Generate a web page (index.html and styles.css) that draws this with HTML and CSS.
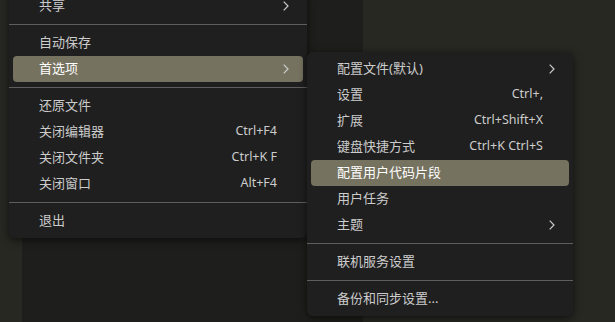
FILE: index.html
```html
<!DOCTYPE html>
<html lang="zh-CN">
<head>
    <meta charset="UTF-8">
    <title>菜单</title>
    <link rel="stylesheet" href="styles.css">
</head>
<body>
    <div class="workbench">
        <div class="activity"></div>
        <div class="sidebar"></div>
        <div class="editor"></div>
    </div>

    <!-- main file menu -->
    <div class="menu main-menu">
        <div class="item"><span class="label">共享</span><svg class="chev" viewBox="0 0 6 10"><polyline points="0.7,0.7 5,5 0.7,9.3"/></svg></div>
        <div class="sep"></div>
        <div class="item"><span class="label">自动保存</span></div>
        <div class="item active"><span class="label">首选项</span><svg class="chev" viewBox="0 0 6 10"><polyline points="0.7,0.7 5,5 0.7,9.3"/></svg></div>
        <div class="sep"></div>
        <div class="item"><span class="label">还原文件</span></div>
        <div class="item"><span class="label">关闭编辑器</span><span class="keys">Ctrl+F4</span></div>
        <div class="item"><span class="label">关闭文件夹</span><span class="keys">Ctrl+K F</span></div>
        <div class="item"><span class="label">关闭窗口</span><span class="keys">Alt+F4</span></div>
        <div class="sep"></div>
        <div class="item"><span class="label">退出</span></div>
    </div>

    <!-- preferences submenu -->
    <div class="menu sub-menu">
        <div class="item"><span class="label">配置文件(默认)</span><svg class="chev" viewBox="0 0 6 10"><polyline points="0.7,0.7 5,5 0.7,9.3"/></svg></div>
        <div class="item"><span class="label">设置</span><span class="keys">Ctrl+,</span></div>
        <div class="item"><span class="label">扩展</span><span class="keys">Ctrl+Shift+X</span></div>
        <div class="item"><span class="label">键盘快捷方式</span><span class="keys">Ctrl+K Ctrl+S</span></div>
        <div class="item active"><span class="label">配置用户代码片段</span></div>
        <div class="item"><span class="label">用户任务</span></div>
        <div class="item"><span class="label">主题</span><svg class="chev" viewBox="0 0 6 10"><polyline points="0.7,0.7 5,5 0.7,9.3"/></svg></div>
        <div class="sep"></div>
        <div class="item"><span class="label">联机服务设置</span></div>
        <div class="sep"></div>
        <div class="item"><span class="label">备份和同步设置...</span></div>
    </div>
</body>
</html>
```

FILE: styles.css
```css
html, body {
    margin: 0;
    height: 100%;
    overflow: hidden;
}

body {
    background: #272822;
    font-family: "Noto Sans", "Noto Sans CJK SC", sans-serif;
    font-size: 13px;
    color: #cccccc;
}

.workbench {
    display: flex;
    height: 100%;
}

.activity {
    width: 22px;
    background: #272822;
}

.sidebar {
    width: 341px;
    background: #1e1f1c;
}

.editor {
    flex: 1;
    background: #272822;
}

.menu {
    position: absolute;
    background: #1f1f1f;
    border-radius: 6px;
    padding: 4px 0;
    box-shadow: 0 2px 8px rgba(0, 0, 0, 0.6);
    display: flex;
    flex-direction: column;
}

.main-menu {
    left: 9px;
    top: -11px;
    width: 298px;
}

.sub-menu {
    left: 307px;
    top: 52px;
    width: 266px;
}

.item {
    box-sizing: border-box;
    height: 26px;
    margin: 0 4px;
    padding: 0 26px 3px;
    border-radius: 4px;
    display: flex;
    align-items: center;
    position: relative;
}

.item.active {
    background: #767260;
    color: #ffffff;
}

.label {
    flex: 1;
    white-space: nowrap;
}

.keys {
    white-space: nowrap;
    font-size: 12.5px;
}

.chev {
    position: absolute;
    right: 14px;
    top: 8px;
    width: 6px;
    height: 10px;
    fill: none;
    stroke: #cccccc;
    stroke-width: 1.2;
}

.sep {
    height: 1px;
    margin: 5px 0;
    background: #5e5e5e;
}
```
